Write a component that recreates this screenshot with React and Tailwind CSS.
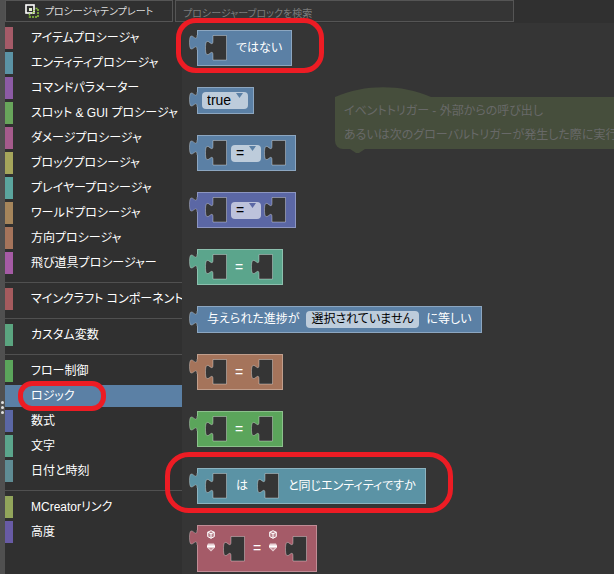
import { useState } from 'react'
import clsx from 'clsx'

const categoryGroups = [
  [
    { name: 'アイテムプロシージャ', color: 'bg-[#a55b68]' },
    { name: 'エンティティプロシージャ', color: 'bg-[#5b93a5]' },
    { name: 'コマンドパラメーター', color: 'bg-[#8c5ba5]' },
    { name: 'スロット & GUI プロシージャ', color: 'bg-[#68a55b]' },
    { name: 'ダメージプロシージャ', color: 'bg-[#a55b8c]' },
    { name: 'ブロックプロシージャ', color: 'bg-[#a5a55b]' },
    { name: 'プレイヤープロシージャ', color: 'bg-[#5ba59e]' },
    { name: 'ワールドプロシージャ', color: 'bg-[#a5855b]' },
    { name: '方向プロシージャ', color: 'bg-[#a5745b]' },
    { name: '飛び道具プロシージャー', color: 'bg-[#a55ba5]' },
  ],
  [{ name: 'マインクラフト コンポーネント', color: 'bg-[#a55b5e]' }],
  [{ name: 'カスタム変数', color: 'bg-[#5ba580]' }],
  [
    { name: 'フロー制御', color: 'bg-[#5ba55b]' },
    { name: 'ロジック', color: 'bg-[#5b80a5]' },
    { name: '数式', color: 'bg-[#5b67a5]' },
    { name: '文字', color: 'bg-[#5ba58c]' },
    { name: '日付と時刻', color: 'bg-[#5f8c94]' },
  ],
  [
    { name: 'MCreatorリンク', color: 'bg-[#92a55b]' },
    { name: '高度', color: 'bg-[#685ba5]' },
  ],
]

function TemplateIcon() {
  return (
    <svg className="h-[14px] w-[14px] shrink-0" viewBox="0 0 14 14" fill="none">
      <rect x="1" y="1" width="8" height="8" stroke="#fff" strokeWidth="1.6" />
      <rect x="4" y="4" width="3" height="3" fill="#dfeccb" />
      <path d="M4.500 9.500v3.500h8.500V4.500H9.500" stroke="#8fc63f" strokeWidth="1.500" strokeDasharray="2 1" />
      <path d="M9 6v3H6" stroke="#8fc63f" strokeWidth="1.500" strokeDasharray="1 1" />
    </svg>
  )
}

function EntityIcons() {
  return (
    <div className="flex w-2 flex-col gap-1 self-start">
      <svg className="h-[9px] w-2" viewBox="0 0 8 9" fill="none" stroke="#fff">
        <path d="M4 .7 7.3 2.2v4.4L4 8.3.7 6.6V2.2z" fill="#fff" fillOpacity=".25" />
        <path d="M.7 2.2 4 3.8l3.3-1.6M4 3.8v4.5" />
      </svg>
      <svg className="h-[9px] w-2" viewBox="0 0 8 9">
        <path d="M1 .5h6l1 2v2L4 8.5 0 4.500v-2z" fill="#e8cfd3" />
        <path d="M0 2.500h8v1.500H0z" fill="#fff" />
        <path d="M2 5h4L4 7z" fill="#c58f98" />
      </svg>
    </div>
  )
}

function Socket() {
  return (
    <svg className="h-[26px] w-[22px] shrink-0" viewBox="0 0 22 26">
      <path
        d="M8 .5H21.500V25H8V20.500c0-10-7.500 8-7.500-7.500s7.500 2.500 7.500-7.500z"
        fill="#353535"
        stroke="#fff"
        strokeOpacity=".35"
      />
    </svg>
  )
}

function Block({ color, tab, tall, children }) {
  return (
    <div className="flex">
      <svg className="z-10 mt-[5px] -mr-px h-4 w-[9px] shrink-0" viewBox="0 0 9 16">
        <path d="M9 0H8c0 10-7.500-8-7.500 7.500S8 5 8 15h1z" className={tab} />
        <path d="M8 0c0 10-7.500-8-7.500 7.500S8 5 8 15" fill="none" stroke="#fff" strokeOpacity=".3" />
      </svg>
      <div
        className={clsx(
          'flex items-center border border-white/30 pr-[9px] whitespace-nowrap text-white',
          tall ? 'py-1 pl-[9px]' : 'pl-[7px]',
          color
        )}
      >
        {children}
      </div>
    </div>
  )
}

function Dropdown({ label, value, fill, arrow }) {
  return (
    <span className="relative flex">
      <select
        aria-label={label}
        defaultValue={value}
        className={clsx(
          'h-[17px] appearance-none rounded-[4px] pl-[5px] leading-[17px] text-black outline-none',
          arrow ? 'pr-4' : 'pr-[5px]',
          fill
        )}
      >
        <option>{value}</option>
      </select>
      {arrow && (
        <svg className={clsx('pointer-events-none absolute top-px right-[5px] h-[5px] w-[7px]', arrow)} viewBox="0 0 7 5">
          <path d="M0 0h7L3.500 5z" />
        </svg>
      )}
    </span>
  )
}

function Equals() {
  return <span className="px-2 text-[14px]">=</span>
}

function Flyout() {
  return (
    <div className="flex flex-col items-start gap-[21px] pl-[7px] pt-[7px] text-[12px] leading-[17px]">
      <Block color="h-9 bg-[#5b80a5]" tab="fill-[#5b80a5]">
        <Socket />
        <span className="pl-[9px]">ではない</span>
      </Block>
      <Block color="h-[27px] bg-[#5b80a5]" tab="fill-[#5b80a5]">
        <span className="-mx-1 flex pl-px text-[14px]">
          <Dropdown label="真偽値" value="true" fill="bg-[#bdccdb]" arrow="fill-[#5b80a5]" />
        </span>
      </Block>
      <Block color="h-9 bg-[#5b80a5]" tab="fill-[#5b80a5]">
        <Socket />
        <span className="flex pr-[3px] pl-1 text-[14px]">
          <Dropdown label="比較" value="=" fill="bg-[#bdccdb]" arrow="fill-[#5b80a5]" />
        </span>
        <Socket />
      </Block>
      <Block color="h-9 bg-[#5b67a5]" tab="fill-[#5b67a5]">
        <Socket />
        <span className="flex pr-[3px] pl-1 text-[14px]">
          <Dropdown label="数値の比較" value="=" fill="bg-[#bdc2db]" arrow="fill-[#5b67a5]" />
        </span>
        <Socket />
      </Block>
      <Block color="h-9 bg-[#5ba58c]" tab="fill-[#5ba58c]">
        <Socket />
        <Equals />
        <Socket />
      </Block>
      <Block color="h-[27px] bg-[#5b80a5]" tab="fill-[#5b80a5]">
        <span className="flex items-center gap-[7px] pl-[2px]">
          <span>与えられた進捗が</span>
          <Dropdown label="進捗" value="選択されていません" fill="bg-[#bdccdb]" />
          <span>に等しい</span>
        </span>
      </Block>
      <Block color="h-9 bg-[#a5745b]" tab="fill-[#a5745b]">
        <Socket />
        <Equals />
        <Socket />
      </Block>
      <Block color="h-9 bg-[#5ba55b]" tab="fill-[#5ba55b]">
        <Socket />
        <Equals />
        <Socket />
      </Block>
      <Block color="h-9 bg-[#5b93a5]" tab="fill-[#5b93a5]">
        <Socket />
        <span className="px-[9px]">は</span>
        <Socket />
        <span className="pl-[9px]">と同じエンティティですか</span>
      </Block>
      <Block color="h-[47px] bg-[#a55b68]" tab="fill-[#a55b68]" tall>
        <EntityIcons />
        <span className="w-2" />
        <Socket />
        <Equals />
        <EntityIcons />
        <span className="w-2" />
        <Socket />
      </Block>
    </div>
  )
}

// Event trigger block that lies on the canvas behind the flyout
function TriggerBlock() {
  return (
    <div className="absolute top-16 left-[153px] w-[420px]">
      <svg className="block h-[10px] w-24" viewBox="0 0 96 10">
        <path d="M0 10C30-3 66-3 96 10z" fill="#464e3c" />
      </svg>
      <div className="rounded-bl-lg bg-[#464e3c] py-[2px] pl-[9px] text-[12px] leading-6 whitespace-nowrap text-[#686968]">
        <p>イベントトリガー - 外部からの呼び出し</p>
        <p>あるいは次のグローバルトリガーが発生した際に実行</p>
      </div>
      <svg className="ml-[15px] block h-1 w-[15px]" viewBox="0 0 15 4">
        <path d="M0 0h15L9 4H6z" fill="#464e3c" />
      </svg>
    </div>
  )
}

export default function App() {
  const [selected, setSelected] = useState('ロジック')

  return (
    <div className="relative flex min-h-screen overflow-hidden bg-[#303030] font-['Liberation_Sans','Noto_Sans_CJK_JP',sans-serif] [font-feature-settings:'palt']">
      <div className="relative w-[5px] shrink-0 bg-[#505050]">
        <div className="absolute top-[401px] left-px flex flex-col gap-[2px]">
          <span className="h-[3px] w-[3px] rounded-full bg-[#e0e0e0]" />
          <span className="h-[3px] w-[3px] rounded-full bg-[#e0e0e0]" />
          <span className="h-[3px] w-[3px] rounded-full bg-[#e0e0e0]" />
        </div>
      </div>

      <div className="flex min-w-0 flex-1 flex-col">
        <header className="flex h-[23px] items-start gap-[2px] pr-[100px]">
          <button className="flex h-[22px] w-[168px] shrink-0 items-center justify-center gap-[6px] border border-[#555] text-[10px] text-[#dcdcdc]">
            <TemplateIcon />
            プロシージャテンプレート
          </button>
          <input
            type="text"
            aria-label="プロシージャーブロックを検索"
            placeholder="プロシージャーブロックを検索"
            className="h-[22px] min-w-0 flex-1 border border-[#555] bg-[#353535] px-[7px] pt-1 text-[10px] text-white outline-none placeholder:text-[#7c7c7c]"
          />
        </header>

        <div className="flex flex-1">
          <nav className="w-[177px] shrink-0 pt-1">
            {categoryGroups.map((group, i) => (
              <div key={i}>
                {i > 0 && <hr className="mt-2 mb-[5px] border-[#505050]" />}
                {group.map(({ name, color }) => (
                  <button
                    key={name}
                    onClick={() => setSelected(name)}
                    className={clsx(
                      'mb-[3px] flex h-[22px] w-full items-center gap-[18px] text-[12px] whitespace-nowrap text-white',
                      selected === name && color
                    )}
                  >
                    <span className={clsx('h-full w-2 shrink-0', color)} />
                    {name}
                  </button>
                ))}
              </div>
            ))}
          </nav>

          <main className="relative min-w-0 flex-1 overflow-hidden bg-[#353535]">
            <TriggerBlock />
            <div className="relative">
              <Flyout />
            </div>
          </main>
        </div>
      </div>

      {/* highlight rings */}
      <div className="pointer-events-none absolute top-[18px] left-[176px] h-[55px] w-[148px] rounded-[20px] border-5 border-[#ed1c24]" />
      <div className="pointer-events-none absolute top-[381px] left-[18px] h-[30px] w-[88px] rounded-[14px] border-5 border-[#ed1c24]" />
      <div className="pointer-events-none absolute top-[452px] left-[165px] h-[61px] w-[288px] rounded-[24px] border-5 border-[#ed1c24]" />
    </div>
  )
}
